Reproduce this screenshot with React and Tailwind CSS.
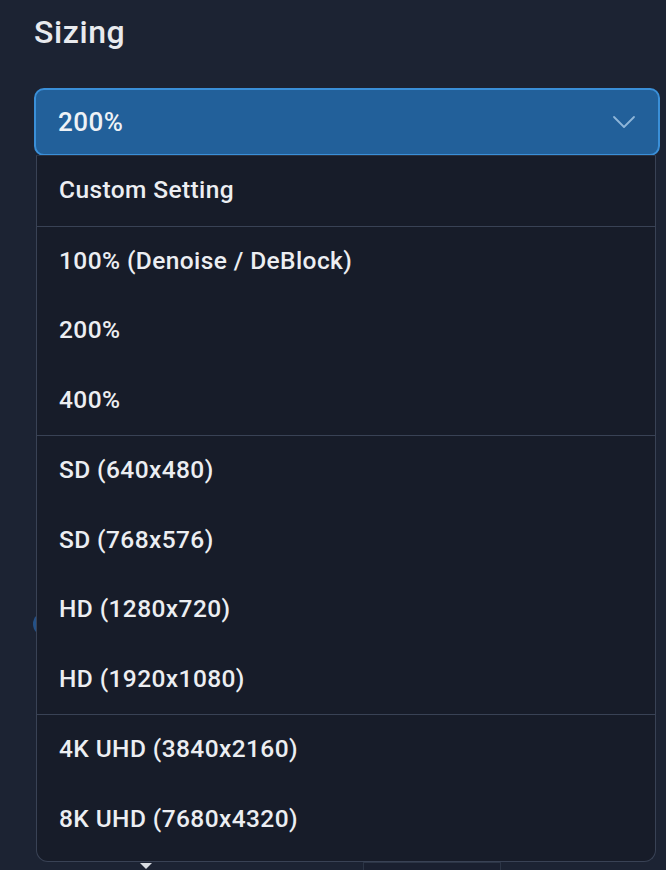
import React from "react";

const groups = [
  ["Custom Setting"],
  ["100% (Denoise / DeBlock)", "200%", "400%"],
  ["SD (640x480)", "SD (768x576)", "HD (1280x720)", "HD (1920x1080)"],
  ["4K UHD (3840x2160)", "8K UHD (7680x4320)"],
];

export default function App() {
  return (
    <div
      className="w-[666px] h-[870px] overflow-hidden bg-[#1c2333] text-[#e9ecf0] flex flex-col pl-[34px] pr-[6px] pt-[13px]"
      style={{ fontFamily: "Roboto, 'Liberation Sans', sans-serif" }}
    >
      <h2 className="text-[32px] leading-[38px] font-medium tracking-[0.6px] text-[#e8eaee]">Sizing</h2>

      <div className="relative z-10 mt-[37px]">
        <div className="h-[68px] rounded-[10px] border-2 border-[#3a8fd8] bg-[#22609a] flex items-center justify-between px-[22px]">
          <span className="text-[26px] font-medium tracking-[0.5px] text-[#eef2f6]">200%</span>
          <svg width="24" height="14" viewBox="0 0 24 14" fill="none">
            <path d="M2 2 L12 12 L22 2" stroke="#8fb6d9" strokeWidth="1.8" strokeLinecap="round" strokeLinejoin="round" />
          </svg>
        </div>
        <div className="absolute left-[2px] right-[4px] top-full -mt-px border border-[#394255] border-t-[#2a3141] rounded-b-[12px] bg-[#171c29] pb-[7px]">
          {groups.map((g, gi) => (
            <div key={gi} className={gi > 0 ? "border-t border-[#394255]" : ""}>
              {g.map((t, i) => (
                <div key={i} className="h-[69.5px] flex items-center pl-[22px] text-[24.5px] font-medium tracking-[0.4px] text-[#eceef2]">
                  {t}
                </div>
              ))}
            </div>
          ))}
        </div>
      </div>

      <div className="mt-[456px] flex items-center">
        <div className="-ml-[1px] w-[24px] h-[24px] rounded-full bg-[#2a6fc0] opacity-60" />
      </div>

      <div className="mt-[226px] flex items-start">
        <div className="ml-[106px] mt-px w-0 h-0 border-l-[6px] border-r-[6px] border-t-[6px] border-l-transparent border-r-transparent border-t-[#d8dce2]" />
        <div className="ml-[211px] w-[138px] h-[20px] border border-[#2c3546] bg-[#1a2030]" />
      </div>
    </div>
  );
}
